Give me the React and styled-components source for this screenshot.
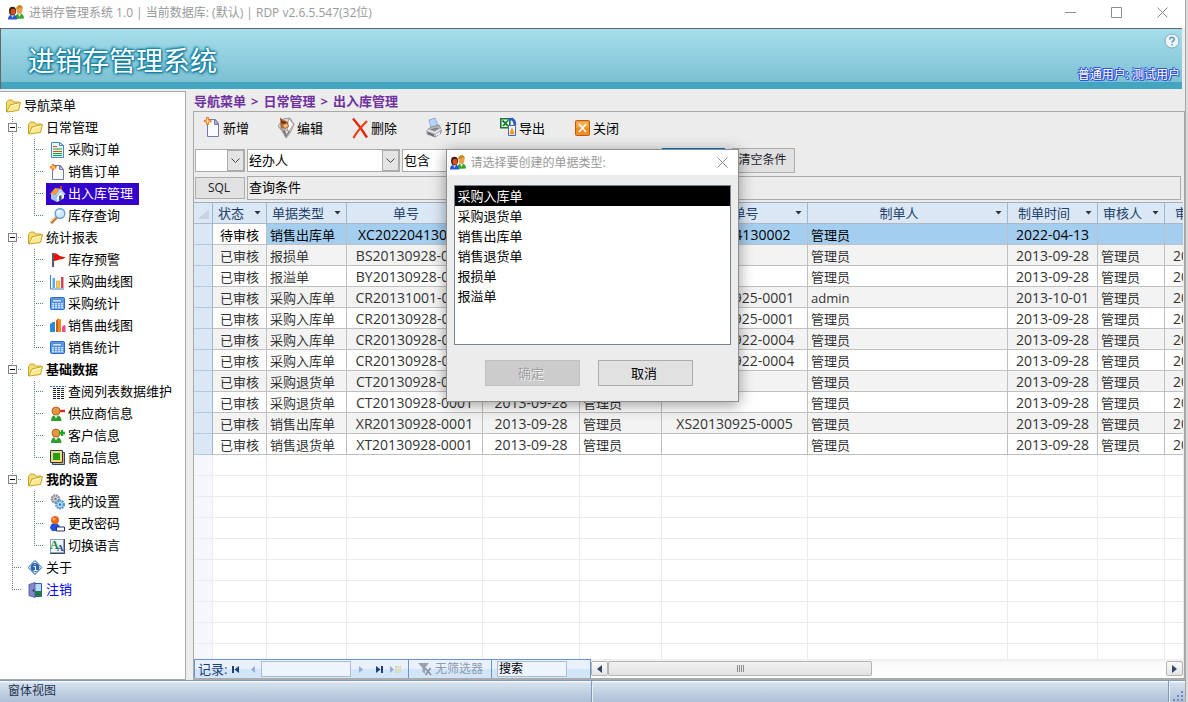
import React from "react";
import styled, { createGlobalStyle, css } from "styled-components";

const Global = createGlobalStyle`
  * { box-sizing: border-box; }
  body {
    margin: 0;
    background: #dcdcdc;
    color: #000;
    font: 13px/20px "Open Sans", "Noto Sans CJK SC", sans-serif;
  }
  button, input, select { font: inherit; color: inherit; margin: 0; padding: 0; border-radius: 0; }
  button { cursor: default; }
  svg { display: block; flex: none; }
`;

/* ---------- icons ---------- */

const Svg = ({ w = 16, h = 16, children }) => (
  <svg width={w} height={h} viewBox={`0 0 ${w} ${h}`} aria-hidden="true">{children}</svg>
);

const UsersIcon = () => (
  <Svg>
    <path d="M7 14c0-4 2-5.500 4.500-5.500S16 10 16 13.500z" fill="#35a52f" />
    <path d="M10 9l1.500 3L13 9z" fill="#d8f0c8" />
    <ellipse cx="11.500" cy="5" rx="3" ry="4" fill="#e8a050" />
    <path d="M8.300 4.500C8 1.500 10 0 11.500 0s3.500 1 3.200 4L13 2.500z" fill="#c98a20" />
    <path d="M0 14.500C0 11 2 9.500 4.500 9.500S9 11 9 14.500z" fill="#2457d8" />
    <path d="M3 10l1.500 3L6 10z" fill="#c8dcff" />
    <ellipse cx="4.500" cy="6" rx="3.500" ry="4.200" fill="#3a1d14" />
    <ellipse cx="5" cy="6.800" rx="2.500" ry="3" fill="#d8501c" />
  </Svg>
);
const FolderIcon = () => (
  <Svg>
    <path d="M.5 14V4.500L2.500 2h3.500L7.500 4H13v3" fill="#f6dc76" stroke="#c9a227" />
    <path d="M1 14L4 7l10.500-2.500L12.500 12.500z" fill="#fbe98f" stroke="#c9a227" strokeLinejoin="round" />
    <path d="M2.500 12.500L5 8l8-2" fill="none" stroke="#fffbd8" />
  </Svg>
);
const OrderIcon = () => (
  <Svg>
    <path d="M1.500.5h8l4 3v12h-12z" fill="#e9f5fd" stroke="#3f8fc6" />
    <path d="M9.500.5v3h4z" fill="#fff" stroke="#3f8fc6" />
    <path d="M3 4.500h4M3 9.500h9" stroke="#e04a18" />
    <path d="M3 7h9M3 11.500h9M3 13.500h9" stroke="#1f9a30" />
  </Svg>
);
const NewIcon = () => (
  <Svg>
    <path d="M2.500 1.500h8l3 4v10h-11z" fill="#fafbff" stroke="#7478a8" />
    <path d="M9.500 1.500v4h4z" fill="#c9cce6" stroke="#7478a8" />
    <path d="M3 0v6.500M0 3.200h6.500" stroke="#f07818" strokeWidth="2.400" />
    <path d="M3 1.500v3.500M1.500 3.200h3.500" stroke="#ffd08a" strokeWidth="1" />
  </Svg>
);
const HouseIcon = () => (
  <Svg>
    <path d="M10 0h2v5h-2z" fill="#c83a20" />
    <path d="M1 8v5l6 3 7-4V7L8 3z" fill="#9cc6ea" />
    <path d="M7 8v8l7-4V7l-3-4z" fill="#eaf4fd" />
    <path d="M0 8l5-6 5 .5L6 9z" fill="#f59a3c" />
    <path d="M6 8.500L10 2.500l5.500 5.500-1 1-4-4-3.500 5z" fill="#d8e6f4" stroke="#5a88b8" strokeWidth=".5" />
    <path d="M9 10l2.500-1v4.500L9 15z" fill="#46586c" />
  </Svg>
);
const SearchIcon = () => (
  <Svg>
    <path d="M1 15l6-6" stroke="#c4762a" strokeWidth="3" />
    <path d="M1 14l5-5" stroke="#f3b878" />
    <circle cx="10" cy="5.500" r="4.800" fill="#cfeafa" stroke="#6ba3d6" strokeWidth="1.500" />
    <path d="M7.500 5.500A2.600 2.600 0 0 1 10 3" stroke="#fff" strokeWidth="1.500" fill="none" />
  </Svg>
);
const FlagIcon = () => (
  <Svg>
    <path d="M3 1v14" stroke="#53586a" strokeWidth="2" />
    <path d="M4 1.500c2-1 4 1.500 6 2.500l5.500 1.500c-2 1.500-4 1.500-6 2S6 9 4 9z" fill="#e8140c" />
  </Svg>
);
const PurchaseChartIcon = () => (
  <Svg>
    <path d="M.5 1v14H14" stroke="#3f7fc0" fill="none" />
    <path d="M2.500 4h2.500v10H2.500z" fill="#58a8ee" />
    <path d="M6.500 7h3v6.500h-3z" fill="#f6cf4c" stroke="#c89a28" strokeWidth=".6" />
    <path d="M11 3h2.500v11H11z" fill="#d8405c" />
  </Svg>
);
const StatIcon = () => (
  <Svg>
    <rect x=".5" y="1.500" width="14" height="12" rx="1" fill="#5b9bea" stroke="#2a6bc8" />
    <path d="M2.500 3.500h9v2.500h-9z" fill="#cde4ff" stroke="#2a6bc8" strokeWidth=".6" />
    <path d="M2 7.800h11M2 9.800h11M2 11.800h11" stroke="#fff" strokeDasharray="2 1" />
  </Svg>
);
const SalesChartIcon = () => (
  <Svg>
    <path d="M0 6l3-2h2v10H0z" fill="#2a8ad8" />
    <path d="M6 3l2-2.500 3 1V14H6z" fill="#f08a1c" />
    <path d="M6 3l2-2.500V14H6z" fill="#c8641a" />
    <path d="M12 9l2-2 1.500 1v6H12z" fill="#e8508c" />
  </Svg>
);
const ListIcon = () => (
  <Svg>
    <path d="M0 2.500h16" stroke="#2a6bc8" strokeDasharray="2 1" />
    <path d="M3 4.500h12M3 6.500h12M3 8.500h12M3 10.500h12M3 12.500h12M3 14.500h12" stroke="#222" strokeDasharray="3 1" />
  </Svg>
);
const Person = () => (
  <>
    <path d="M1 15c0-4 2-6 5-6s5.500 2 5.500 6z" fill="#2f9e32" />
    <path d="M4 9h4l-2 3.500z" fill="#fff0d8" />
    <circle cx="6" cy="5" r="4" fill="#e8953c" stroke="#9a5618" strokeWidth=".8" />
  </>
);
const SupplierIcon = () => (
  <Svg><Person /><path d="M10 5h5" stroke="#e02818" strokeWidth="2.400" /></Svg>
);
const CustomerIcon = () => (
  <Svg><Person /><path d="M9 5h6M12 2v6" stroke="#1ea82a" strokeWidth="2.400" /></Svg>
);
const ProductIcon = () => (
  <Svg>
    <path d="M2.500 2.500h12v12h-12z" fill="#d8b060" stroke="#2a4668" />
    <path d="M.5.5h12v12H.5z" fill="#ffd47a" stroke="#1c3c64" />
    <path d="M3 3h7v7H3z" fill="#1fa01f" />
  </Svg>
);
const GearsIcon = () => (
  <Svg>
    <circle cx="5.500" cy="5" r="3.600" fill="#d8dade" stroke="#8c9098" strokeWidth="2.400" strokeDasharray="1.800 .6" />
    <circle cx="5.500" cy="5" r="1.200" fill="#777" />
    <circle cx="10" cy="10.500" r="3.800" fill="#bfe2f8" stroke="#4c9ad2" strokeWidth="2.400" strokeDasharray="1.800 .6" />
    <circle cx="10" cy="10.500" r="1.200" fill="#2b6fa8" />
  </Svg>
);
const PasswordIcon = () => (
  <Svg>
    <path d="M0 12c0-3 2-5 4.500-5S10 9 10 12l-2 3H2z" fill="#2450dc" />
    <circle cx="5" cy="4" r="4" fill="#f2661c" />
    <circle cx="4" cy="3" r="1.500" fill="#ffae78" />
    <path d="M6.500 11h8v4h-8z" fill="#fff" stroke="#22356a" />
  </Svg>
);
const LanguageIcon = () => (
  <Svg>
    <path d="M0 1h15v15H0z" fill="#3f4c66" />
    <path d="M0 1h14v14H0z" fill="#8ea0c0" />
    <path d="M1 2h12v12H1z" fill="#eef3fb" />
    <text x="0" y="11" fontSize="12" fontWeight="700" fontFamily="Liberation Serif, serif" fill="#128a2c">A</text>
    <text x="7" y="13" fontSize="9" fontWeight="700" fontFamily="Liberation Serif, serif" fill="#1c3a8c">A</text>
  </Svg>
);
const AboutIcon = () => (
  <Svg>
    <path d="M7 .5l6.800 7L7 14.500.2 7.500z" fill="#e4f0fc" stroke="#235a9c" />
    <circle cx="7" cy="7.500" r="4.400" fill="#2862b0" />
    <path d="M5.500 6.500h2V10M5.500 10.500h4M6.500 4.500h1" stroke="#fff" fill="none" />
  </Svg>
);
const LogoutIcon = () => (
  <Svg>
    <path d="M6.500 1.500h7v13h-7z" fill="#b4d8f8" stroke="#39579c" />
    <path d="M7 9h6v5H7z" fill="#14803a" />
    <path d="M1 2.500L7 .5v15l-6-2z" fill="#8088cc" stroke="#4a4e98" strokeWidth=".8" />
    <path d="M5.500 7.500v2" stroke="#20244c" strokeWidth="1.500" />
  </Svg>
);

const ToolNewIcon = () => (
  <Svg w={18} h={22}>
    <path d="M3.500 2.500h8l3 4v13h-11z" fill="#fafbff" stroke="#7478a8" />
    <path d="M10.500 2.500v5h4z" fill="#b8bcd8" stroke="#7478a8" />
    <path d="M3.500 0v8M0 4h7.500" stroke="#f07818" strokeWidth="2.600" />
    <path d="M3.500 1.500v5M1.500 4h4.500" stroke="#ffe0a8" />
  </Svg>
);
const ToolEditIcon = () => (
  <Svg w={18} h={22}>
    <path d="M0 9L5 2l7-1 4 6.500-4 8.500-4 5-2.500-5z" fill="#dcdcdc" stroke="#9a9a9a" />
    <path d="M11 1.500l4.500 6-5.500 8-1-7z" fill="#fff" stroke="#888" strokeWidth=".7" />
    <path d="M1 9l6 4 1 8-4-6z" fill="#a0a0a0" />
    <path d="M2 1l4 2 4 2 1 5-4 2-4-1-1-4 1-2z" fill="#b86a34" />
    <path d="M2 0l2 4 5 1-3 2-3-1z" fill="#7a2f14" />
    <path d="M5 8l4-1 1 2-3 2z" fill="#efc488" />
    <path d="M5 14l3 6.500 4-6-4-2z" fill="#777" />
    <path d="M7 13l1.500 5 2-4z" fill="#dedede" />
  </Svg>
);
const ToolDeleteIcon = () => (
  <Svg w={18} h={22}>
    <path d="M1 1.500C5 6 11 14 15 20.500" stroke="#dd2a0e" strokeWidth="2.400" fill="none" />
    <path d="M15 4C10 9 5 14 1.500 21" stroke="#f0400f" strokeWidth="2.200" fill="none" />
  </Svg>
);
const ToolPrintIcon = () => (
  <Svg w={18} h={22}>
    <path d="M5 11L3 3l6-2 3 8z" fill="#b9d4fa" stroke="#7c9ee0" strokeWidth=".8" />
    <path d="M1 13l4-3 8-2 2 4v4l-6 4-8-3z" fill="#b8bac0" stroke="#7e828a" strokeWidth=".8" />
    <path d="M1 13l8 2.500 6-3.500" fill="none" stroke="#fff" />
    <path d="M4 12.500l7-2 2 1-5 2.500z" fill="#7d8188" />
    <path d="M2 15l6 2.500v2l-6-2.500z" fill="#66696f" />
    <path d="M10 17l4-2v2l-4 2z" fill="#f0f0f0" />
  </Svg>
);
const ToolExportIcon = () => (
  <Svg w={18} h={22}>
    <path d="M.8 1.800h9v9h-9z" fill="#f4fff4" stroke="#1a7a30" strokeWidth="1.600" />
    <path d="M2.500 3.500l5.500 5.500M8 3.500l-5 5.500" stroke="#1a7a30" strokeWidth="1.800" />
    <path d="M8 2.500l4-.5c2 1 3 3 3 6" stroke="#2c5cc0" strokeWidth="2.600" fill="none" />
    <path d="M8.500 8.500h7v10h-7z" fill="#f3f7ff" stroke="#4668b0" />
    <path d="M12 10l2.500 6c0 2-5 2-5 0z" fill="#f5a018" />
  </Svg>
);
const ToolCloseIcon = () => (
  <Svg w={18} h={22}>
    <rect x="1.500" y="3.500" width="14" height="15" rx="1" fill="#f08c22" stroke="#b85c10" />
    <path d="M2.500 4.500h12v6h-12z" fill="#f8ac50" />
    <path d="M5 7l7 8M12 7l-7 8" stroke="#fff" strokeWidth="1.600" />
  </Svg>
);

const CloseGlyph = () => (
  <Svg w={11} h={11}><path d="M.5.5l10 10M10.500.5l-10 10" stroke="#8c8c8c" /></Svg>
);
const Chevron = () => (
  <Svg w={9} h={6}><path d="M.5.500l4 4 4-4" stroke="#444" fill="none" /></Svg>
);
const ArrowDown = () => (
  <Svg w={7} h={4}><path d="M.5 0h6l-3 3.500z" fill="#2b3340" /></Svg>
);

/* ---------- window ---------- */

const Window = styled.div`
  position: relative;
  display: flex;
  flex-direction: column;
  height: 100vh;
  margin-right: 2px;
  border-right: 1px solid #a6a6a6;
  background: #ececec;
  overflow: hidden;
`;
const TitleBar = styled.header`
  display: flex;
  align-items: center;
  height: 28px;
  padding: 0 0 3px 8px;
  background: #fff;
  color: #999;
  font-size: 12px;
  flex: none;
`;
const TitleText = styled.div`
  flex: 1;
  padding-left: 5px;
`;
const WindowButton = styled.button`
  display: flex;
  align-items: center;
  justify-content: center;
  width: ${(p) => (p.$wide ? 46 : 15)}px;
  height: 20px;
  border: 0;
  background: none;
`;
const Banner = styled.div`
  display: flex;
  flex: none;
  justify-content: space-between;
  height: 61px;
  margin: 0 3px 2px 0;
  border-top: 1px solid #666;
  border-left: 1px solid #666;
  background: linear-gradient(#a6deeb, #7dc1d3) 0 0 / 100% 53px no-repeat, #43a5c0;
`;
const BannerTitle = styled.h1`
  margin: 0;
  padding-left: 27px;
  color: #fff;
  font-size: 27px;
  font-weight: 400;
  line-height: 64px;
  text-shadow: 0 0 2px #0f7f9f, 0 0 2px #0f7f9f, 1px 1px 2px #0b6f8f, -1px -1px 2px #1f88a8, 0 0 4px #1f88a8;
`;
const BannerSide = styled.div`
  display: flex;
  flex-direction: column;
  align-items: flex-end;
  justify-content: space-between;
  padding: 4px 2px 6px 0;
  color: #fff;
  font-size: 12px;
  line-height: 16px;
  text-shadow: 1px 0 #3350d8, -1px 0 #3350d8, 0 1px #3350d8, 0 -1px #3350d8, 1px 1px #3350d8, -1px -1px #3350d8;
`;
const HelpButton = styled.button`
  display: block;
  border: 0;
  background: none;
`;

const Body = styled.div`
  display: flex;
  flex: 1;
  min-height: 0;
`;

/* ---------- navigation tree ---------- */

const Sidebar = styled.nav`
  flex: none;
  width: 186px;
  padding-top: 3px;
  border: solid #a9a9a9;
  border-width: 1px 1px 1px 0;
  background: #fff;
`;
const TreeList = styled.ul`
  margin: 0;
  padding: 0;
  list-style: none;
`;
const TreeRow = styled.div`
  display: flex;
  height: 22px;
`;
const dotsDown = "repeating-linear-gradient(#5d8a68 0 1px, transparent 1px 2px)";
const dotsAcross = "repeating-linear-gradient(90deg, #5d8a68 0 1px, transparent 1px 2px)";
const guides = {
  line: css` background: ${dotsDown} 12px 0 / 1px 100% no-repeat; `,
  branch: css` background: ${dotsDown} 12px 0 / 1px 100% no-repeat, ${dotsAcross} 12px 10px / 10px 1px no-repeat; `,
  end: css` background: ${dotsDown} 12px 0 / 1px 11px no-repeat, ${dotsAcross} 12px 10px / 10px 1px no-repeat; `,
};
const Guide = styled.span`
  flex: none;
  width: 22px;
  padding: 6px 0 0 8px;
  ${(p) => guides[p.$kind]}
`;
const Expander = styled.button`
  display: flex;
  align-items: center;
  justify-content: center;
  width: 9px;
  height: 9px;
  border: 1px solid #808080;
  background: #fff;
`;
const NodeLink = styled.a`
  display: flex;
  align-items: center;
  gap: 2px;
  margin-left: 2px;
  padding: 0 6px 0 4px;
  text-decoration: none;
  white-space: nowrap;
  color: ${(p) => (p.$selected ? "#fff" : p.$blue ? "#00f" : "#000")};
  background: ${(p) => (p.$selected ? "#3300cc" : "transparent")};
  font-weight: ${(p) => (p.$bold ? 700 : 400)};
`;
const NodeLabel = styled.span`
  align-self: flex-start;
  line-height: 20px;
`;

const tree = [
  { label: "日常管理", items: [["采购订单", OrderIcon], ["销售订单", NewIcon], ["出入库管理", HouseIcon, true], ["库存查询", SearchIcon]] },
  { label: "统计报表", items: [["库存预警", FlagIcon], ["采购曲线图", PurchaseChartIcon], ["采购统计", StatIcon], ["销售曲线图", SalesChartIcon], ["销售统计", StatIcon]] },
  { label: "基础数据", bold: true, items: [["查阅列表数据维护", ListIcon], ["供应商信息", SupplierIcon], ["客户信息", CustomerIcon], ["商品信息", ProductIcon]] },
  { label: "我的设置", bold: true, items: [["我的设置", GearsIcon], ["更改密码", PasswordIcon], ["切换语言", LanguageIcon]] },
];

const Node = ({ icon: Icon, label, selected, blue, bold }) => (
  <NodeLink href="#" $selected={selected} $blue={blue} $bold={bold}>
    <Icon />
    <NodeLabel>{label}</NodeLabel>
  </NodeLink>
);

const Tree = () => (
  <TreeList>
    <li>
      <TreeRow><Node icon={FolderIcon} label="导航菜单" /></TreeRow>
      <TreeList>
        {tree.map((group) => (
          <li key={group.label}>
            <TreeRow>
              <Guide $kind="branch">
                <Expander aria-label={group.label} aria-expanded="true">
                  <Svg w={5} h={1}><path d="M0 .5h5" stroke="#000" /></Svg>
                </Expander>
              </Guide>
              <Node icon={FolderIcon} label={group.label} bold={group.bold} />
            </TreeRow>
            <TreeList>
              {group.items.map(([label, icon, selected], i) => (
                <li key={label}>
                  <TreeRow>
                    <Guide $kind="line" />
                    <Guide $kind={i === group.items.length - 1 ? "end" : "branch"} />
                    <Node icon={icon} label={label} selected={selected} />
                  </TreeRow>
                </li>
              ))}
            </TreeList>
          </li>
        ))}
        <li><TreeRow><Guide $kind="branch" /><Node icon={AboutIcon} label="关于" /></TreeRow></li>
        <li><TreeRow><Guide $kind="end" /><Node icon={LogoutIcon} label="注销" blue /></TreeRow></li>
      </TreeList>
    </li>
  </TreeList>
);

/* ---------- main form ---------- */

const Main = styled.main`
  display: flex;
  flex: 1;
  flex-direction: column;
  min-width: 0;
  padding-left: 7px;
`;
const Breadcrumb = styled.div`
  display: flex;
  flex: none;
  gap: 5px;
  height: 20px;
  padding-left: 1px;
  color: #7030a0;
  font-weight: 700;
  line-height: 20px;
`;
const Form = styled.section`
  display: flex;
  flex: 1;
  flex-direction: column;
  min-height: 0;
  border: 1px solid #a9a9a9;
  border-bottom: 2px solid #ababab;
`;
const Toolbar = styled.div`
  display: flex;
  flex: none;
  height: 33px;
  padding: 0 0 1px 10px;
`;
const ToolButton = styled.button`
  display: flex;
  align-items: center;
  width: 74px;
  gap: 1px;
  border: 0;
  background: none;
  color: #000;
`;
const FormRow = styled.div`
  display: flex;
  flex: none;
  align-items: center;
  gap: 2px;
  height: 25px;
  margin-top: 3px;
  padding: 0 3px 0 1px;
`;
const SqlRow = styled(FormRow)`
  height: 24px;
  margin: 3px 0 2px;
`;
const SelectBox = styled.div`
  display: flex;
  flex: none;
  width: ${(p) => p.$width}px;
  height: 23px;
  border: 1px solid #ababab;
  background: #fff;
`;
const BareSelect = styled.select`
  flex: 1;
  min-width: 0;
  padding: 0 1px 2px;
  appearance: none;
  border: 0;
  background: #fff;
  outline: 0;
`;
const DropPart = styled.span`
  display: flex;
  flex: none;
  align-items: center;
  justify-content: center;
  width: 17px;
  border: 1px solid #ababab;
  background: #e4e4e4;
  pointer-events: none;
`;
const TextField = styled.input`
  flex: ${(p) => (p.$width ? "none" : 1)};
  width: ${(p) => (p.$width ? p.$width + "px" : "auto")};
  min-width: 0;
  height: ${(p) => p.$height || 23}px;
  padding: 0 1px ${(p) => p.$lift || 0}px;
  border: 1px solid ${(p) => p.$border || "#ababab"};
  background: ${(p) => p.$bg || "#fff"};
  color: #000;
  outline: 0;
`;
const FlatButton = styled.button`
  flex: none;
  width: ${(p) => p.$width}px;
  height: ${(p) => p.$height || 25}px;
  margin-left: ${(p) => p.$before || 0}px;
  padding: 0 2px 2px 0;
  border: ${(p) => (p.$focused ? "2px solid #0078d7" : "1px solid #adadad")};
  background: #e1e1e1;
  color: #1b1b2b;
  font-size: 12px;
  white-space: nowrap;
`;

const Combo = ({ label, value, width }) => (
  <SelectBox $width={width}>
    <BareSelect aria-label={label} defaultValue={value}><option>{value}</option></BareSelect>
    <DropPart><Chevron /></DropPart>
  </SelectBox>
);

/* ---------- datasheet ---------- */

const Sheet = styled.div`
  flex: 1;
  min-height: 0;
  overflow: hidden;
  margin-right: 1px;
  border-top: 1px solid #a0aec2;
  background: #fff;
`;
const Table = styled.table`
  width: 1061px;
  table-layout: fixed;
  border-spacing: 0;
  line-height: 20px;
`;
const HeadCell = styled.th`
  height: 21px;
  padding: 0;
  border-right: 1px solid #9eb6ce;
  border-bottom: 1px solid #b0b8c4;
  background: #dae7f5;
  color: #24406a;
  font-weight: 400;
`;
const HeadInner = styled.div`
  display: flex;
  align-items: center;
  padding-right: 1px;
`;
const HeadLabel = styled.span` flex: 1; `;
const SortButton = styled.button`
  display: flex;
  align-items: center;
  justify-content: center;
  width: 16px;
  height: 20px;
  border: 0;
  background: none;
`;
const Row = styled.tr`
  background: ${(p) => (p.$current ? "#a4cef0" : p.$alt ? "#f3f3f3" : "#fff")};
  color: ${(p) => (p.$current ? "#000" : "#333")};
`;
const Cell = styled.td`
  height: 21px;
  padding: 2px 3px 0;
  overflow: hidden;
  border-right: 1px solid #c0c0c0;
  border-bottom: 1px solid #c0c0c0;
  line-height: 18px;
  white-space: nowrap;
  text-align: ${(p) => (p.$center ? "center" : "left")};
  font-size: ${(p) => (p.$code ? 14 : 13)}px;
  ${(p) => p.$active && css` background: #fff; `}
`;
const SelectorCell = styled.td`
  height: 21px;
  padding: 0;
  border-right: 1px solid #9eb6ce;
  border-bottom: 1px solid #b4c8de;
  background: #dae7f5;
`;
const BlankCell = styled.td`
  height: 21px;
  padding: 0;
  border-right: 1px solid #ececf0;
  border-bottom: 1px solid #ececec;
  &:first-child { background: #f6f6fd; }
`;

const columns = [
  { label: "状态", width: 54, center: true },
  { label: "单据类型", width: 80 },
  { label: "单号", width: 136, center: true, code: true },
  { label: "单据日期", width: 97, center: true, code: true },
  { label: "经办人", width: 82 },
  { label: "原入库单号", width: 146, center: true, code: true },
  { label: "制单人", width: 200 },
  { label: "制单时间", width: 90, center: true, code: true },
  { label: "审核人", width: 67 },
  { label: "审核时间", width: 90, center: true, code: true },
];
const d = "2013-09-28";
const m = "管理员";
const records = [
  ["待审核", "销售出库单", "XC202204130002", "2022-04-13", m, "XS202204130002", m, "2022-04-13", "", ""],
  ["已审核", "报损单", "BS20130928-0001", d, m, "", m, d, m, d],
  ["已审核", "报溢单", "BY20130928-0001", d, m, "", m, d, m, d],
  ["已审核", "采购入库单", "CR20131001-0001", "2013-10-01", m, "CG20130925-0001", "admin", "2013-10-01", m, d],
  ["已审核", "采购入库单", "CR20130928-0004", d, m, "CG20130925-0001", m, d, m, d],
  ["已审核", "采购入库单", "CR20130928-0003", d, m, "CG20130922-0004", m, d, m, d],
  ["已审核", "采购入库单", "CR20130928-0002", d, m, "CG20130922-0004", m, d, m, d],
  ["已审核", "采购退货单", "CT20130928-0002", d, m, "", m, d, m, d],
  ["已审核", "采购退货单", "CT20130928-0001", d, m, "", m, d, m, d],
  ["已审核", "销售出库单", "XR20130928-0001", d, m, "XS20130925-0005", m, d, m, d],
  ["已审核", "销售退货单", "XT20130928-0001", d, m, "", m, d, m, d],
];

const Datasheet = () => (
  <Sheet>
    <Table>
      <colgroup>
        <col width={19} />
        {columns.map((c) => <col key={c.label} width={c.width} />)}
      </colgroup>
      <thead>
        <tr>
          <HeadCell aria-label="全选">
            <Svg w={18} h={16}><path d="M15 4v10H4z" fill="#c6d3e2" /></Svg>
          </HeadCell>
          {columns.map((c) => (
            <HeadCell key={c.label} scope="col">
              <HeadInner>
                <HeadLabel>{c.label}</HeadLabel>
                <SortButton aria-label={c.label}><ArrowDown /></SortButton>
              </HeadInner>
            </HeadCell>
          ))}
        </tr>
      </thead>
      <tbody>
        {records.map((r, i) => (
          <Row key={r[2]} $current={i === 0} $alt={i % 2 === 1}>
            <SelectorCell />
            {r.map((value, j) => (
              <Cell key={j} $center={columns[j].center} $code={columns[j].code} $active={i === 0 && j === 0}>{value}</Cell>
            ))}
          </Row>
        ))}
        {Array.from({ length: 10 }, (_, i) => (
          <tr key={i} aria-hidden="true">
            {Array.from({ length: 11 }, (_, j) => <BlankCell key={j} />)}
          </tr>
        ))}
      </tbody>
    </Table>
  </Sheet>
);

/* ---------- record navigator ---------- */

const Footer = styled.div`
  display: flex;
  flex: none;
  height: 19px;
  margin-right: 1px;
  background: #f2f2f2;
`;
const Navigator = styled.div`
  display: flex;
  align-items: stretch;
  width: 397px;
  border: solid #6a94cf;
  border-width: 1px 1px 0 1px;
  background: linear-gradient(#e8f1fd 0 9px, #d3e5fa 9px);
  color: #1c3f78;
  font-size: 13px;
  line-height: 18px;
`;
const NavPart = styled.div`
  display: flex;
  align-items: center;
  width: ${(p) => p.$width}px;
  padding-left: ${(p) => p.$pad}px;
  gap: ${(p) => p.$gap || 0}px;
  border-right: ${(p) => (p.$last ? 0 : "1px solid #6a94cf")};
  color: ${(p) => (p.$muted ? "#8d9bb0" : "inherit")};
  font-size: ${(p) => (p.$small ? 12 : 13)}px;
  white-space: nowrap;
`;
const NavButton = styled.button`
  display: flex;
  align-items: center;
  justify-content: center;
  width: ${(p) => p.$width || 17}px;
  height: 16px;
  border: 0;
  background: none;
`;
const ScrollBar = styled.div`
  display: flex;
  flex: 1;
  align-items: center;
  background: linear-gradient(#ececec, #fafafa 4px, #fff);
`;
const ScrollButton = styled.button`
  display: flex;
  align-items: center;
  justify-content: center;
  width: 17px;
  height: 15px;
  border: 1px solid #b4b4b4;
  border-radius: 2px;
  background: linear-gradient(#fafafa, #e4e4e4);
`;
const Thumb = styled.div`
  display: flex;
  align-items: center;
  justify-content: center;
  width: 264px;
  height: 15px;
  border: 1px solid #b4b4b4;
  border-radius: 2px;
  background: linear-gradient(#f2f2f2, #e2e2e2);
`;
const ScrollSpace = styled.div` flex: 1; `;

const StatusBar = styled.footer`
  display: flex;
  flex: none;
  align-items: stretch;
  height: 22px;
  border-top: 1px solid #7f9bc2;
  background: linear-gradient(#f2f7fc 0 1px, #d4e0ed 2px, #afc1d7);
  color: #1e3250;
  font-size: 12px;
  line-height: 20px;
`;
const StatusPart = styled.div`
  flex: ${(p) => (p.$width ? "none" : 1)};
  width: ${(p) => (p.$width ? p.$width + "px" : "auto")};
  padding-left: 8px;
  border-right: 1px solid #8298b8;
  box-shadow: 1px 0 #e6eef7;
`;
const Grip = styled.div`
  display: flex;
  align-items: flex-end;
  justify-content: flex-end;
  width: 16px;
`;

/* ---------- dialog ---------- */

const Dialog = styled.section`
  position: absolute;
  top: 149px;
  left: calc(50% - 147px);
  width: 293px;
  border: 1px solid #8f8f8f;
  background: #ececec;
  box-shadow: 0 3px 14px rgba(0, 0, 0, 0.4);
`;
const DialogTitle = styled.div`
  display: flex;
  align-items: center;
  height: 25px;
  padding: 0 8px 0 3px;
  background: #fff;
  color: #999;
  font-size: 12px;
`;
const DialogBody = styled.form`
  padding: 10px 7px 15px;
`;
const ListBox = styled.select`
  display: block;
  width: 100%;
  height: 160px;
  overflow: hidden;
  border: 1px solid #7a8290;
  background: #fff;
  color: #000;
  outline: 0;
  option {
    min-height: 20px;
    height: 20px;
    padding: 0 3px;
    line-height: 20px;
  }
  option:checked {
    background: #000 linear-gradient(#000, #000);
    color: #fff;
    -webkit-text-fill-color: #fff;
  }
`;
const DialogActions = styled.div`
  display: flex;
  justify-content: center;
  gap: 18px;
  margin-top: 15px;
  padding-right: 7px;
`;
const DialogButton = styled.button`
  width: 95px;
  height: 26px;
  padding: 0 2px 1px 0;
  border: 1px solid #adadad;
  background: #e1e1e1;
  color: #000;
  &:disabled {
    border-color: #bfbfbf;
    background: #ccc;
    color: #a0a0a0;
    text-shadow: 1px 1px #f4f4f4;
  }
`;

const types = ["采购入库单", "采购退货单", "销售出库单", "销售退货单", "报损单", "报溢单"];

const tools = [
  ["新增", ToolNewIcon],
  ["编辑", ToolEditIcon],
  ["删除", ToolDeleteIcon],
  ["打印", ToolPrintIcon],
  ["导出", ToolExportIcon],
  ["关闭", ToolCloseIcon],
];

export default function App() {
  return (
    <>
      <Global />
      <Window>
        <TitleBar>
          <UsersIcon />
          <TitleText>进销存管理系统 1.0 | 当前数据库: (默认) | RDP v2.6.5.547(32位)</TitleText>
          <WindowButton aria-label="最小化" $wide><Svg w={11} h={11}><path d="M0 5.500h11" stroke="#8c8c8c" /></Svg></WindowButton>
          <WindowButton aria-label="最大化" $wide><Svg w={11} h={11}><path d="M.5.500h10v10H.5z" fill="none" stroke="#8c8c8c" /></Svg></WindowButton>
          <WindowButton aria-label="关闭" $wide><CloseGlyph /></WindowButton>
        </TitleBar>
        <Banner>
          <BannerTitle>进销存管理系统</BannerTitle>
          <BannerSide>
            <HelpButton aria-label="帮助">
              <Svg>
                <circle cx="8" cy="8" r="7" fill="#eef6fb" stroke="#7fa8c4" />
                <path d="M5.700 6.500C5.700 3.800 10.300 3.800 10.300 6.300 10.300 8 8 8 8 9.700M8 11v1.600" stroke="#6c9cc4" strokeWidth="1.700" fill="none" />
              </Svg>
            </HelpButton>
            <div>普通用户: 测试用户</div>
          </BannerSide>
        </Banner>
        <Body>
          <Sidebar aria-label="导航菜单"><Tree /></Sidebar>
          <Main>
            <Breadcrumb>
              <span>导航菜单</span>
              <span>&gt;</span>
              <span>日常管理</span>
              <span>&gt;</span>
              <span>出入库管理</span>
            </Breadcrumb>
            <Form>
              <Toolbar>
                {tools.map(([label, Icon]) => (
                  <ToolButton key={label}><Icon />{label}</ToolButton>
                ))}
              </Toolbar>
              <FormRow>
                <Combo label="逻辑" value="" width={50} />
                <Combo label="字段" value="经办人" width={153} />
                <Combo label="比较" value="包含" width={146} />
                <TextField aria-label="值" $width={106} />
                <FlatButton aria-label="查询" $width={63} $before={4} $focused />
                <FlatButton $width={63} $before={5}>清空条件</FlatButton>
              </FormRow>
              <SqlRow>
                <FlatButton $width={50} $height={22}>SQL</FlatButton>
                <TextField aria-label="查询条件" defaultValue="查询条件" readOnly $height={24} $lift={4} $bg="#ececec" />
              </SqlRow>
              <Datasheet />
              <Footer>
                <Navigator>
                  <NavPart $width={214} $pad={3}>
                    <span>记录:</span>
                    <NavButton aria-label="第一条"><Svg w={7} h={7}><path d="M1 0v7" stroke="#1c3f78" strokeWidth="2" /><path d="M7 0v7L2.500 3.500z" fill="#1c3f78" /></Svg></NavButton>
                    <NavButton aria-label="上一条"><Svg w={4} h={7}><path d="M4 0v7L0 3.500z" fill="#93aed6" /></Svg></NavButton>
                    <TextField aria-label="当前记录" $width={90} $height={16} $border="#a9bdd8" $bg="#edf4fc" />
                    <NavButton aria-label="下一条" $width={20}><Svg w={4} h={7}><path d="M0 0v7l4-3.500z" fill="#93aed6" /></Svg></NavButton>
                    <NavButton aria-label="最后一条" $width={16}><Svg w={7} h={7}><path d="M6 0v7" stroke="#1c3f78" strokeWidth="2" /><path d="M0 0v7l4.500-3.500z" fill="#1c3f78" /></Svg></NavButton>
                    <NavButton aria-label="新记录"><Svg w={12} h={7}><path d="M0 0v7l4-3.500z" fill="#93aed6" /><path d="M5 1h6M5 3.500h6M5 6h6" stroke="#dcd9a8" strokeWidth="2" strokeDasharray="2 .5" /></Svg></NavButton>
                  </NavPart>
                  <NavPart $width={83} $pad={8} $gap={2} $muted $small>
                    <Svg><path d="M1 2h11L8 7v5.500L5.500 11V7z" fill="#98a2b0" /><path d="M8 7l6 7M13.500 7l-5 7" stroke="#8a94a2" strokeWidth="1.800" /></Svg>
                    无筛选器
                  </NavPart>
                  <NavPart $pad={5} $last $small>
                    <TextField aria-label="搜索" defaultValue="搜索" $width={70} $height={16} $border="#a9bdd8" $bg="#edf4fc" />
                  </NavPart>
                </Navigator>
                <ScrollBar>
                  <ScrollButton aria-label="向左滚动"><Svg w={5} h={8}><path d="M5 0v8L0 4z" fill="#34456c" /></Svg></ScrollButton>
                  <Thumb><Svg w={7} h={7}><path d="M.5 0v7M2.500 0v7M4.500 0v7M6.500 0v7" stroke="#8c8c8c" /></Svg></Thumb>
                  <ScrollSpace />
                  <ScrollButton aria-label="向右滚动"><Svg w={5} h={8}><path d="M0 0v8l5-4z" fill="#34456c" /></Svg></ScrollButton>
                </ScrollBar>
              </Footer>
            </Form>
          </Main>
        </Body>
        <StatusBar>
          <StatusPart $width={592}>窗体视图</StatusPart>
          <StatusPart />
          <Grip>
            <Svg w={12} h={12}><path d="M8 1h2v2H8zM4 5h2v2H4zM8 5h2v2H8zM0 9h2v2H0zM4 9h2v2H4zM8 9h2v2H8z" fill="#6d8bb8" /></Svg>
          </Grip>
        </StatusBar>
        <Dialog role="dialog" aria-labelledby="dialog-title">
          <DialogTitle>
            <UsersIcon />
            <TitleText id="dialog-title">请选择要创建的单据类型:</TitleText>
            <WindowButton aria-label="关闭"><CloseGlyph /></WindowButton>
          </DialogTitle>
          <DialogBody>
            <ListBox size={8} aria-labelledby="dialog-title" defaultValue={types[0]}>
              {types.map((t) => <option key={t}>{t}</option>)}
            </ListBox>
            <DialogActions>
              <DialogButton type="button" disabled>确定</DialogButton>
              <DialogButton type="button">取消</DialogButton>
            </DialogActions>
          </DialogBody>
        </Dialog>
      </Window>
    </>
  );
}
